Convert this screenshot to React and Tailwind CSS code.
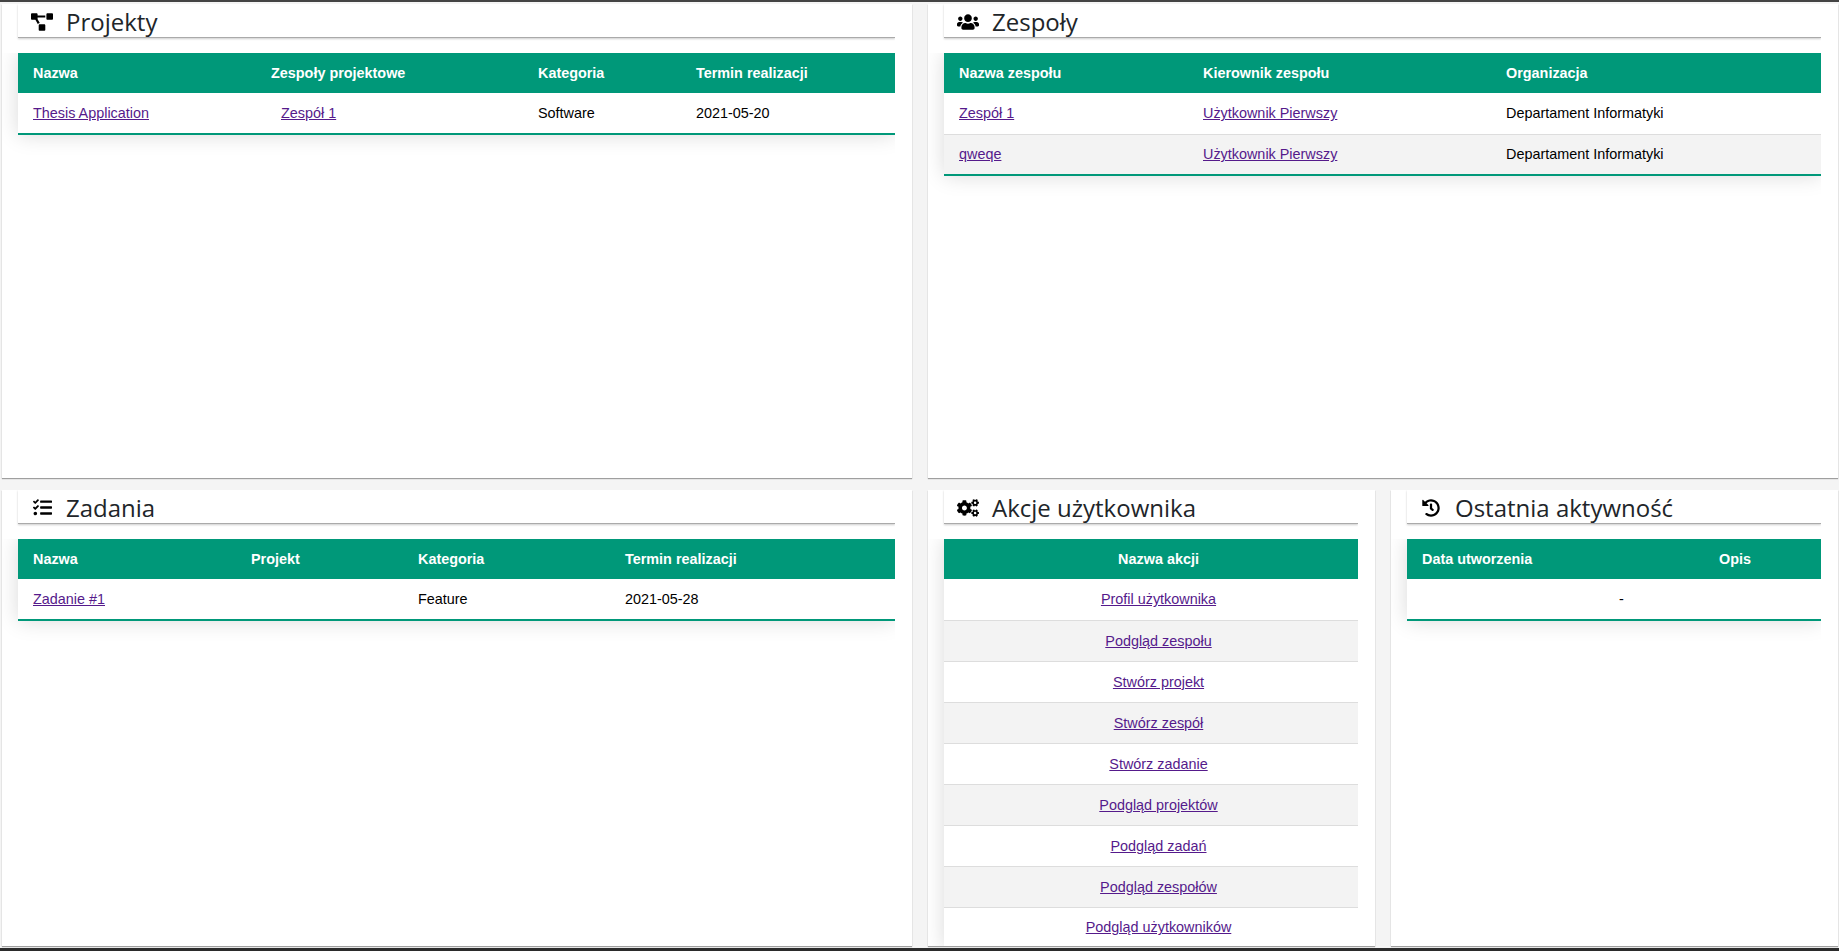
import React from 'react';
import { FaProjectDiagram, FaUsers, FaTasks, FaCogs, FaHistory } from 'react-icons/fa';

const Link = ({ children }) => (
  <a href="#" className="text-[#551a8b] underline">{children}</a>
);

const Panel = ({ icon: Icon, iconClass, title, className, children }) => (
  <section className={`bg-white shadow-[0_1px_1px_rgba(0,0,0,0.35)] pl-4 pr-[17px] overflow-hidden ${className}`}>
    <div className="h-[34px] pt-[2px] flex items-center border-b border-[#aaaaaa] shadow-[0_1px_2px_rgba(0,0,0,0.2)] [clip-path:inset(0_0_-4px_-4px)] font-['Open_Sans',sans-serif] text-[24px] text-[#212529]">
      <span className="w-12 flex justify-center shrink-0">
        <Icon className={`${iconClass} w-auto text-black`} />
      </span>
      <span className="leading-[30px]">{title}</span>
    </div>
    {children}
  </section>
);

const Table = ({ cols, rows, center }) => (
  <div className="mt-[15px] [clip-path:inset(0_0_-40px_-40px)]">
    <table className="w-full table-fixed border-collapse font-['Liberation_Sans',Arial,sans-serif] text-[14.4px] shadow-[0_0_20px_rgba(0,0,0,0.15)]">
      <thead>
        <tr className="bg-[#009879] text-white h-10">
          {cols.map((c) => (
            <th
              key={c.name}
              style={{ width: c.width }}
              className={`pt-[2px] pr-[15px] font-bold ${center ? 'pl-[30px] text-center' : 'pl-[15px] text-left'}`}
            >
              {c.name}
            </th>
          ))}
        </tr>
      </thead>
      <tbody>
        {rows.map((row, i) => (
          <tr
            key={i}
            className="h-[41px] border-b border-[#dddddd] last:border-b-2 last:border-[#009879] even:bg-[#f3f3f3]"
          >
            {row.map((cell, j) => (
              <td
                key={j}
                colSpan={cell === '-' ? cols.length : 1}
                className={`pt-[2px] pr-[15px] text-black ${center || cell === '-' ? 'pl-[30px] text-center' : 'pl-[15px]'}`}
              >
                {cell}
              </td>
            ))}
          </tr>
        ))}
      </tbody>
    </table>
  </div>
);

const actions = [
  'Profil użytkownika',
  'Podgląd zespołu',
  'Stwórz projekt',
  'Stwórz zespół',
  'Stwórz zadanie',
  'Podgląd projektów',
  'Podgląd zadań',
  'Podgląd zespołów',
  'Podgląd użytkowników',
];

export default function App() {
  return (
    <div className="h-[951px] overflow-hidden bg-[#f4f4f4] border-t-2 border-b-[3px] border-t-[#444444] border-b-[#2b2b2b] flex flex-col gap-3 pt-[2px] pb-[2px] pl-[2px] pr-[1px]">
      <div className="flex gap-4 h-[474px] shrink-0">
        <Panel icon={FaProjectDiagram} iconClass="h-[22px]" title="Projekty" className="w-[910px]">
          <Table
            cols={[
              { name: 'Nazwa', width: 238 },
              { name: 'Zespoły projektowe', width: 267 },
              { name: 'Kategoria', width: 158 },
              { name: 'Termin realizacji' },
            ]}
            rows={[[<Link>Thesis Application</Link>, <span className="pl-[10px]"><Link>Zespół 1</Link></span>, 'Software', '2021-05-20']]}
          />
        </Panel>
        <Panel icon={FaUsers} iconClass="h-[22px]" title="Zespoły" className="w-[910px]">
          <Table
            cols={[
              { name: 'Nazwa zespołu', width: 244 },
              { name: 'Kierownik zespołu', width: 303 },
              { name: 'Organizacja' },
            ]}
            rows={[
              [<Link>Zespół 1</Link>, <Link>Użytkownik Pierwszy</Link>, 'Departament Informatyki'],
              [<Link>qweqe</Link>, <Link>Użytkownik Pierwszy</Link>, 'Departament Informatyki'],
            ]}
          />
        </Panel>
      </div>
      <div className="flex gap-4 flex-1 min-h-0">
        <Panel icon={FaTasks} iconClass="h-[19px]" title="Zadania" className="w-[910px]">
          <Table
            cols={[
              { name: 'Nazwa', width: 218 },
              { name: 'Projekt', width: 167 },
              { name: 'Kategoria', width: 207 },
              { name: 'Termin realizacji' },
            ]}
            rows={[[<Link>Zadanie #1</Link>, '', 'Feature', '2021-05-28']]}
          />
        </Panel>
        <Panel icon={FaCogs} iconClass="h-[22px]" title="Akcje użytkownika" className="w-[447px]">
          <Table
            center
            cols={[{ name: 'Nazwa akcji' }]}
            rows={actions.map((a) => [<Link>{a}</Link>])}
          />
        </Panel>
        <Panel icon={FaHistory} iconClass="h-[18px]" title="Ostatnia aktywność" className="w-[447px]">
          <Table
            cols={[
              { name: 'Data utworzenia', width: 297 },
              { name: 'Opis' },
            ]}
            rows={[['-']]}
          />
        </Panel>
      </div>
    </div>
  );
}
